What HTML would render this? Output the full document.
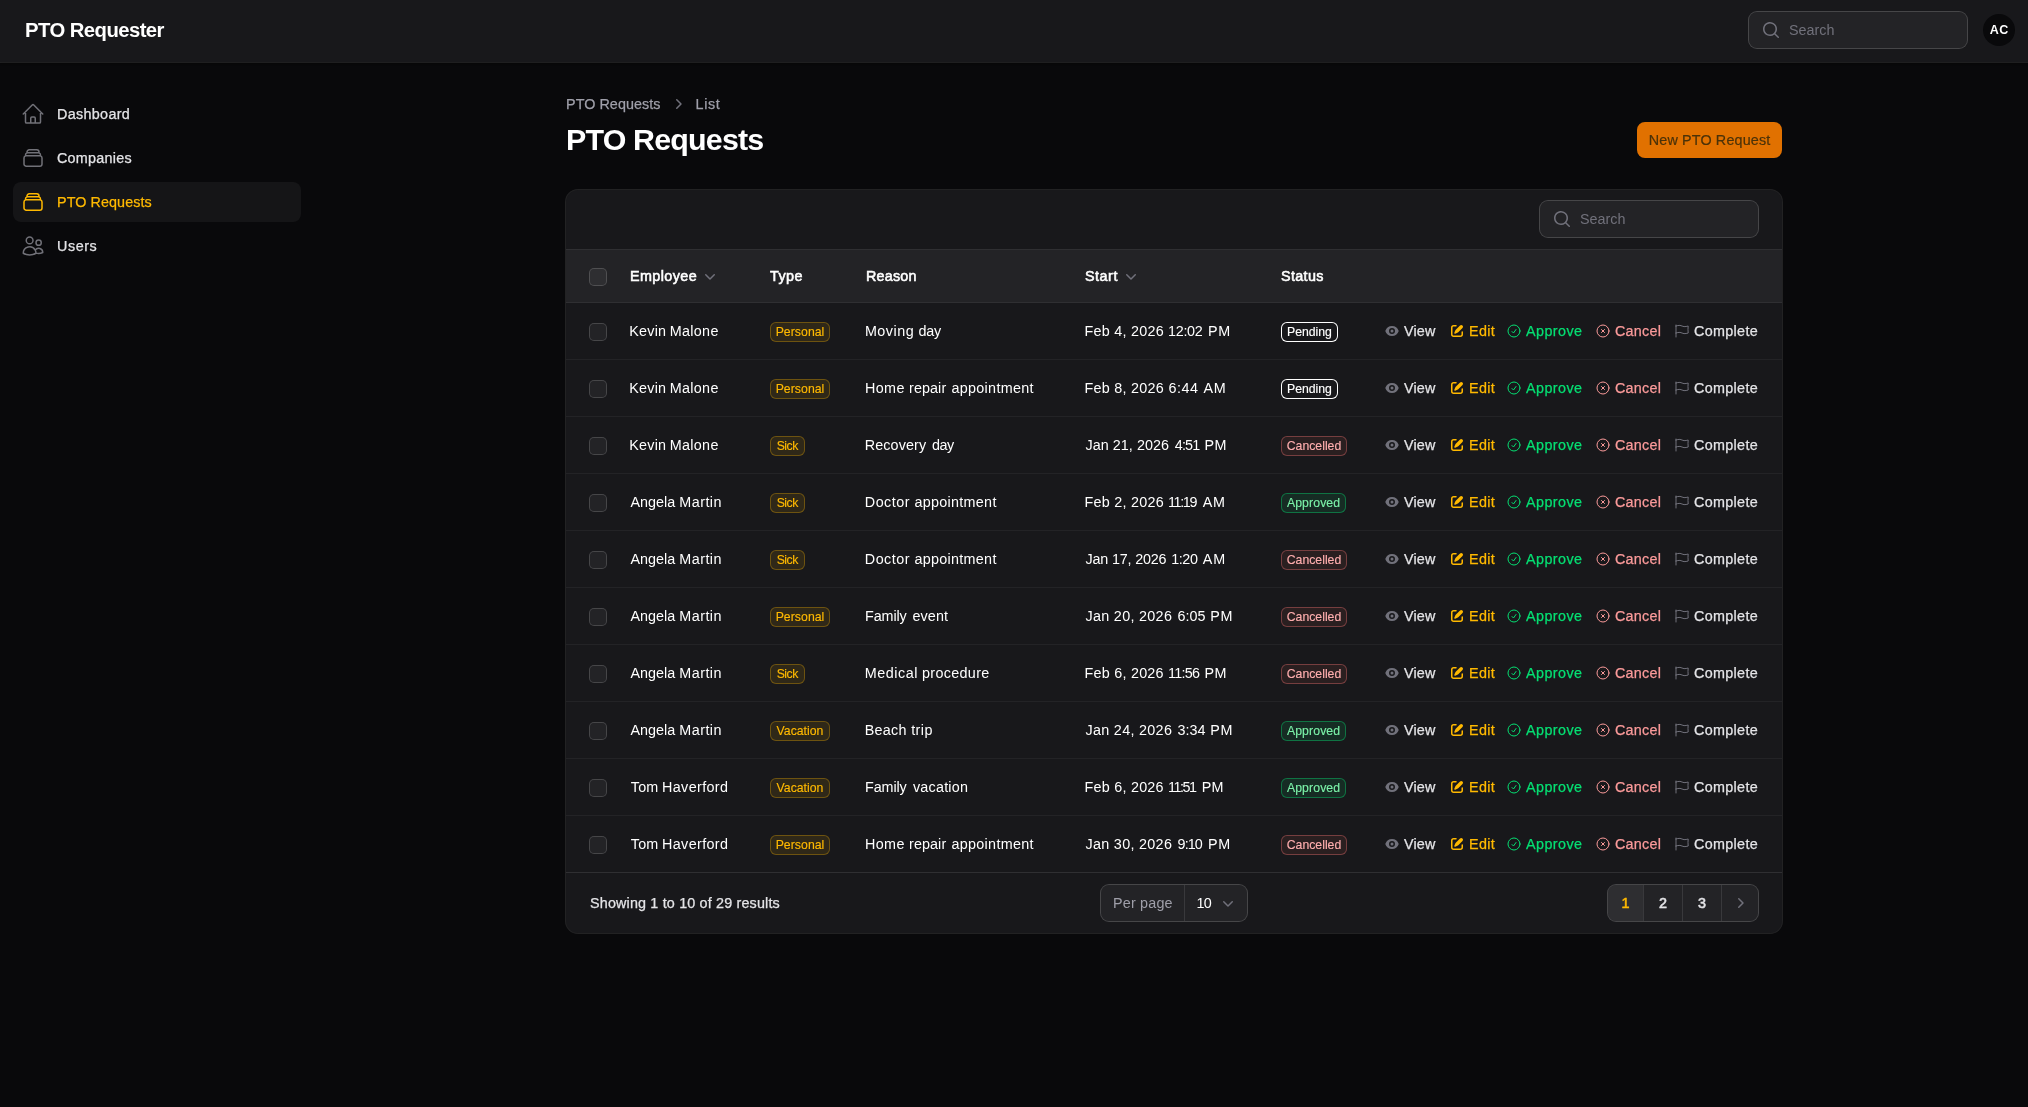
<!DOCTYPE html><html lang="en"><head><meta charset="utf-8"><title>PTO Requests - PTO Requester</title><style>
*{box-sizing:border-box;margin:0;padding:0}
html,body{width:2028px;height:1107px;overflow:hidden;background:#09090b}
body{will-change:transform;font-family:"Liberation Sans",sans-serif;font-size:14px;line-height:24px;color:#fff;position:relative;-webkit-font-smoothing:antialiased}
span,a,h1,p,label{white-space:nowrap}
a{color:inherit;text-decoration:none}
.abs{position:absolute}
svg{display:block;flex:none}
.segs{position:relative;display:inline-block;height:24px;vertical-align:top}
/* topbar */
.topbar{position:absolute;left:0;top:0;width:2028px;height:62px;background:#18181b;box-shadow:0 1px 0 0 rgba(255,255,255,.1),0 2px 2px 0 rgba(0,0,0,.3)}
.brand{position:absolute;left:25px;top:19.5px;line-height:20px;color:#fff}
.gsearch,.tsearch{position:absolute;height:36px;width:218px;border-radius:8px;background:rgba(255,255,255,.05);box-shadow:0 0 0 1px rgba(255,255,255,.2);display:flex;align-items:center;padding-left:12px;color:#71717b}
.gsearch{left:1749px;top:12px}
.gsearch svg,.tsearch svg{margin-right:8px}
.avatar{position:absolute;left:1983px;top:14px;width:32px;height:32px;border-radius:50%;background:#09090b;display:flex;align-items:center;justify-content:center;color:#fff}
/* sidebar */
.nav{position:absolute;left:13px;top:94px;width:288px;list-style:none;display:flex;flex-direction:column;gap:4px}
.nav a{display:flex;align-items:center;gap:12px;height:40px;padding:8px;border-radius:8px;color:#e4e4e7}
.nav a svg{color:#717178}
.nav a.active{background:rgba(255,255,255,.05);color:#ffb900}
.nav a.active svg{color:#ffb900}
/* header */
.crumbs{position:absolute;left:566px;top:92px;height:24px;display:flex;align-items:center;gap:8px;list-style:none;color:#9f9fa9}
.crumbs li{display:flex;align-items:center;gap:8px;position:absolute;top:0;height:24px}
.crumbs svg{color:#71717b}
h1{position:absolute;left:566px;top:121px;line-height:36px;color:#fff}
.btn{position:absolute;left:1637px;top:122px;width:145px;height:36px;border-radius:8px;background:#e17100;color:#4a3209;display:flex;align-items:center;justify-content:center}
/* card */
.card{position:absolute;left:566px;top:190px;width:1216px;height:743px;border-radius:12px;background:#18181b;box-shadow:0 0 0 1px rgba(255,255,255,.1)}
.tsearch{left:974px;top:11px}
.toolbar{height:60px;border-bottom:1px solid rgba(255,255,255,.1);position:relative}
table{border-collapse:collapse;table-layout:fixed;width:1216px}
thead tr{height:52px;background:rgba(255,255,255,.05)}
tbody tr{height:57px;border-top:1px solid rgba(255,255,255,.05)}
tbody tr:first-child{border-top-color:rgba(255,255,255,.1)}
th,td{padding:0 12px;text-align:left;vertical-align:middle;font-weight:400;white-space:nowrap}
th:first-child,td:first-child{padding-left:24px}
th .h{display:flex;align-items:center;gap:0;color:#fff}
th .h span{display:inline-block}
th .h svg{color:#71717b}
.cb{display:block;position:relative;top:1px;width:16px;height:16px;border-radius:4px;background:rgba(255,255,255,.05);box-shadow:0 0 0 1px rgba(255,255,255,.2)}
td{color:#fff}
.badge{display:inline-flex;align-items:center;justify-content:center;height:20px;padding:0;border-radius:6px;line-height:16px;vertical-align:middle}
.b-amber{color:#ffb900;background:rgba(255,185,0,.1);box-shadow:inset 0 0 0 1px rgba(255,185,0,.3)}
.b-red{color:#ffaeae;background:rgba(255,110,100,.08);box-shadow:inset 0 0 0 1px rgba(255,120,120,.36)}
.b-green{color:#7bf1a8;background:rgba(5,223,114,.1);box-shadow:inset 0 0 0 1px rgba(5,223,114,.4)}
.b-white{color:#fff;box-shadow:inset 0 0 0 1px #fff}
.actions{display:flex;align-items:center;justify-content:flex-start;gap:12px;padding-left:24px}
.act{display:flex;align-items:center;gap:4px;flex:none;overflow:visible}
.a-gray{color:#e4e4e7}.a-gray svg{color:#71717b}
.a-amber{color:#ffb900}
.a-green{color:#05df72}
.a-red{color:#fb9a9a}
.footer{position:absolute;left:0;top:682px;width:1216px;height:61px;border-top:1px solid rgba(255,255,255,.1)}
.footer .showing{position:absolute;left:24px;top:18px;color:#e4e4e7}
.perpage{position:absolute;left:535px;top:12px;height:36px;width:146px;border-radius:8px;background:rgba(255,255,255,.05);box-shadow:0 0 0 1px rgba(255,255,255,.2);display:flex;align-items:center}
.perpage .lbl{width:84px;height:36px;border-right:1px solid rgba(255,255,255,.1);display:flex;align-items:center;padding-left:12px;color:#9f9fa9}
.perpage .sel{flex:1;height:36px;display:flex;align-items:center;padding-left:11.5px;color:#fff;position:relative}
.perpage .sel svg{position:absolute;left:33px;top:8px;color:#71717b}
.pager{position:absolute;left:1042px;top:12px;height:36px;width:150px;border-radius:8px;background:rgba(255,255,255,.05);box-shadow:0 0 0 1px rgba(255,255,255,.2);display:flex;list-style:none;overflow:hidden}
.pager li{height:36px;display:flex;align-items:center;justify-content:center;color:#e4e4e7;border-left:1px solid rgba(255,255,255,.1)}
.pager li:first-child{border-left:0}
.pager li.cur{background:rgba(255,255,255,.05);color:#ffb900}
.pager li svg{color:#71717b}
</style></head><body>
<header class="topbar">
<a class="brand"><span style="font-size:20.3px;font-weight:700;letter-spacing:-0.555px;margin-right:0.555px;">PTO Requester</span></a>
<div class="gsearch"><svg width="20" height="20" viewBox="0 0 20 20" fill="currentColor" style=""><path fill-rule="evenodd" clip-rule="evenodd" d="M9 3.5a5.5 5.5 0 1 0 0 11 5.5 5.5 0 0 0 0-11ZM2 9a7 7 0 1 1 12.452 4.391l3.328 3.329a.75.75 0 1 1-1.06 1.06l-3.329-3.328A7 7 0 0 1 2 9Z"/></svg><span style="font-size:14.35px;letter-spacing:0.006px;margin-right:-0.006px;">Search</span></div>
<div class="avatar"><span style="font-size:12.5px;font-weight:700;letter-spacing:0.473px;margin-right:-0.473px;">AC</span></div>
</header>
<nav><ul class="nav">
<li><a><svg width="24" height="24" viewBox="0 0 24 24" fill="none" stroke="currentColor" stroke-width="1.5" stroke-linecap="round" stroke-linejoin="round" style=""><path d="m2.25 12 8.954-8.955c.44-.439 1.152-.439 1.591 0L21.75 12M4.5 9.75v10.125c0 .621.504 1.125 1.125 1.125H9.75v-4.875c0-.621.504-1.125 1.125-1.125h2.25c.621 0 1.125.504 1.125 1.125V21h4.125c.621 0 1.125-.504 1.125-1.125V9.75M8.25 21h8.25"/></svg><span style="font-size:14.35px;-webkit-text-stroke:0.25px currentColor;letter-spacing:0.326px;margin-right:-0.326px;">Dashboard</span></a></li>
<li><a><svg width="24" height="24" viewBox="0 0 24 24" fill="none" stroke="currentColor" stroke-width="1.5" stroke-linecap="round" stroke-linejoin="round" style=""><path d="M6 6.878V6a2.25 2.25 0 0 1 2.25-2.25h7.5A2.25 2.25 0 0 1 18 6v.878m-12 0c.235-.083.487-.128.75-.128h10.5c.263 0 .515.045.75.128m-12 0A2.25 2.25 0 0 0 4.5 9v.878m13.5-3A2.25 2.25 0 0 1 19.5 9v.878m0 0a2.246 2.246 0 0 0-.75-.128H5.25c-.263 0-.515.045-.75.128m15 0A2.25 2.25 0 0 1 21 12v6a2.25 2.25 0 0 1-2.25 2.25H5.25A2.25 2.25 0 0 1 3 18v-6c0-.98.626-1.813 1.5-2.122"/></svg><span style="font-size:14.35px;-webkit-text-stroke:0.25px currentColor;letter-spacing:0.252px;margin-right:-0.252px;">Companies</span></a></li>
<li><a class="active"><svg width="24" height="24" viewBox="0 0 24 24" fill="none" stroke="currentColor" stroke-width="1.5" stroke-linecap="round" stroke-linejoin="round" style=""><path d="M6 6.878V6a2.25 2.25 0 0 1 2.25-2.25h7.5A2.25 2.25 0 0 1 18 6v.878m-12 0c.235-.083.487-.128.75-.128h10.5c.263 0 .515.045.75.128m-12 0A2.25 2.25 0 0 0 4.5 9v.878m13.5-3A2.25 2.25 0 0 1 19.5 9v.878m0 0a2.246 2.246 0 0 0-.75-.128H5.25c-.263 0-.515.045-.75.128m15 0A2.25 2.25 0 0 1 21 12v6a2.25 2.25 0 0 1-2.25 2.25H5.25A2.25 2.25 0 0 1 3 18v-6c0-.98.626-1.813 1.5-2.122"/></svg><span style="font-size:14.35px;-webkit-text-stroke:0.25px currentColor;letter-spacing:0.078px;margin-right:-0.078px;">PTO Requests</span></a></li>
<li><a><svg width="24" height="24" viewBox="0 0 24 24" fill="none" stroke="currentColor" stroke-width="1.5" stroke-linecap="round" stroke-linejoin="round" style=""><path d="M15 19.128a9.38 9.38 0 0 0 2.625.372 9.337 9.337 0 0 0 4.121-.952 4.125 4.125 0 0 0-7.533-2.493M15 19.128v-.003c0-1.113-.285-2.16-.786-3.07M15 19.128v.106A12.318 12.318 0 0 1 8.624 21c-2.331 0-4.512-.645-6.374-1.766l-.001-.109a6.375 6.375 0 0 1 11.964-3.07M12 6.375a3.375 3.375 0 1 1-6.75 0 3.375 3.375 0 0 1 6.75 0Zm8.25 2.25a2.625 2.625 0 1 1-5.25 0 2.625 2.625 0 0 1 5.25 0Z"/></svg><span style="font-size:14.35px;-webkit-text-stroke:0.25px currentColor;letter-spacing:0.554px;margin-right:-0.554px;">Users</span></a></li>
</ul></nav>
<main>
<ol class="crumbs"><li style="left:0"><span style="font-size:14.35px;-webkit-text-stroke:0.25px currentColor;letter-spacing:0.060px;margin-right:-0.060px;">PTO Requests</span></li><li style="left:101.5px"><svg width="20" height="20" viewBox="0 0 20 20" fill="currentColor" style=""><path fill-rule="evenodd" clip-rule="evenodd" d="M8.22 5.22a.75.75 0 0 1 1.06 0l4.25 4.25a.75.75 0 0 1 0 1.06l-4.25 4.25a.75.75 0 0 1-1.06-1.06L11.94 10 8.22 6.28a.75.75 0 0 1 0-1.06Z"/></svg><span style="font-size:14.35px;-webkit-text-stroke:0.25px currentColor;letter-spacing:0.655px;margin-right:-0.655px;">List</span></li></ol>
<h1 style="font-size:30.4px;font-weight:700;letter-spacing:-0.815px;margin-right:0.815px;">PTO Requests</h1>
<a class="btn"><span style="font-size:14.35px;-webkit-text-stroke:0.2px currentColor;letter-spacing:0.155px;margin-right:-0.155px;">New PTO Request</span></a>
<section class="card">
<div class="toolbar"><div class="tsearch"><svg width="20" height="20" viewBox="0 0 20 20" fill="currentColor" style=""><path fill-rule="evenodd" clip-rule="evenodd" d="M9 3.5a5.5 5.5 0 1 0 0 11 5.5 5.5 0 0 0 0-11ZM2 9a7 7 0 1 1 12.452 4.391l3.328 3.329a.75.75 0 1 1-1.06 1.06l-3.329-3.328A7 7 0 0 1 2 9Z"/></svg><span style="font-size:14.35px;letter-spacing:0.006px;margin-right:-0.006px;">Search</span></div></div>
<table><colgroup><col style="width:52px"><col style="width:140px"><col style="width:96px"><col style="width:219px"><col style="width:196px"><col style="width:91px"><col style="width:422px"></colgroup>
<thead><tr><th><span class="cb"></span></th><th><span class="h"><span style="font-size:14.35px;-webkit-text-stroke:0.55px currentColor;letter-spacing:0.413px;margin-right:-0.413px;width:70px">Employee</span><svg width="20" height="20" viewBox="0 0 20 20" fill="currentColor" style=""><path fill-rule="evenodd" clip-rule="evenodd" d="M5.22 8.22a.75.75 0 0 1 1.06 0L10 11.94l3.72-3.72a.75.75 0 1 1 1.06 1.06l-4.25 4.25a.75.75 0 0 1-1.06 0L5.22 9.28a.75.75 0 0 1 0-1.06Z"/></svg></span></th><th><span class="h"><span style="font-size:14.35px;-webkit-text-stroke:0.55px currentColor;letter-spacing:0.427px;margin-right:-0.427px;">Type</span></span></th><th><span class="h"><span style="font-size:14.35px;-webkit-text-stroke:0.55px currentColor;letter-spacing:0.208px;margin-right:-0.208px;">Reason</span></span></th><th><span class="h"><span style="font-size:14.35px;-webkit-text-stroke:0.55px currentColor;letter-spacing:0.523px;margin-right:-0.523px;width:37px">Start</span><svg width="20" height="20" viewBox="0 0 20 20" fill="currentColor" style=""><path fill-rule="evenodd" clip-rule="evenodd" d="M5.22 8.22a.75.75 0 0 1 1.06 0L10 11.94l3.72-3.72a.75.75 0 1 1 1.06 1.06l-4.25 4.25a.75.75 0 0 1-1.06 0L5.22 9.28a.75.75 0 0 1 0-1.06Z"/></svg></span></th><th><span class="h"><span style="font-size:14.35px;-webkit-text-stroke:0.55px currentColor;letter-spacing:0.362px;margin-right:-0.362px;">Status</span></span></th><th></th></tr></thead><tbody>
<tr><td><span class="cb"></span></td>
<td><span class="segs" style="width:88.4px"><span style="font-size:14.35px;letter-spacing:0.224px;margin-right:-0.224px;position:absolute;top:0;left:-0.70px;">Kevin</span> <span style="font-size:14.35px;letter-spacing:0.327px;margin-right:-0.327px;position:absolute;top:0;left:39.70px;">Malone</span></span></td>
<td><span class="badge b-amber" style="width:60px"><span style="font-size:12.25px;-webkit-text-stroke:0.15px currentColor;letter-spacing:0.053px;margin-right:-0.053px;">Personal</span></span></td>
<td><span class="segs" style="width:75.9px"><span style="font-size:14.35px;letter-spacing:0.508px;margin-right:-0.508px;position:absolute;top:0;left:-1.10px;">Moving</span> <span style="font-size:14.35px;letter-spacing:-0.227px;margin-right:0.227px;position:absolute;top:0;left:52.40px;">day</span></span></td>
<td><span class="segs" style="width:144.2px"><span style="font-size:14.35px;letter-spacing:0.262px;margin-right:-0.262px;position:absolute;top:0;left:-0.50px;">Feb 4, 2026</span> <span style="font-size:14.35px;letter-spacing:-0.279px;margin-right:0.279px;position:absolute;top:0;left:83.00px;">12:02</span> <span style="font-size:14.35px;letter-spacing:0.733px;margin-right:-0.733px;position:absolute;top:0;left:122.90px;">PM</span></span></td>
<td><span class="badge b-white" style="width:57px"><span style="font-size:12.25px;-webkit-text-stroke:0.15px currentColor;letter-spacing:-0.024px;margin-right:0.024px;">Pending</span></span></td>
<td style="padding:0"><div class="actions"><a class="act a-gray" style="width:53px"><svg width="16" height="16" viewBox="0 0 16 16" fill="currentColor" style=""><path d="M8 9.5a1.5 1.5 0 1 0 0-3 1.5 1.5 0 0 0 0 3Z"/><path fill-rule="evenodd" clip-rule="evenodd" d="M1.38 8.28a.87.87 0 0 1 0-.566 7.003 7.003 0 0 1 13.238.006.87.87 0 0 1 0 .566A7.003 7.003 0 0 1 1.379 8.28ZM11 8a3 3 0 1 1-6 0 3 3 0 0 1 6 0Z"/></svg><span style="font-size:14.35px;-webkit-text-stroke:0.25px currentColor;letter-spacing:0.176px;margin-right:-0.176px;">View</span></a><a class="act a-amber" style="width:45px"><svg width="16" height="16" viewBox="0 0 16 16" fill="currentColor" style=""><path d="M13.488 2.513a1.75 1.75 0 0 0-2.475 0L6.75 6.774a2.75 2.75 0 0 0-.596.892l-.848 2.047a.75.75 0 0 0 .98.98l2.047-.848a2.75 2.75 0 0 0 .892-.596l4.261-4.262a1.75 1.75 0 0 0 0-2.474Z"/><path d="M4.75 3.5c-.69 0-1.25.56-1.25 1.25v6.5c0 .69.56 1.25 1.25 1.25h6.5c.69 0 1.25-.56 1.25-1.25V9A.75.75 0 0 1 14 9v2.25A2.75 2.75 0 0 1 11.25 14h-6.5A2.75 2.75 0 0 1 2 11.25v-6.5A2.75 2.75 0 0 1 4.75 2H7a.75.75 0 0 1 0 1.5H4.75Z"/></svg><span style="font-size:14.35px;-webkit-text-stroke:0.25px currentColor;letter-spacing:0.323px;margin-right:-0.323px;">Edit</span></a><a class="act a-green" style="width:77px"><svg width="16" height="16" viewBox="0 0 24 24" fill="none" stroke="currentColor" stroke-width="1.5" stroke-linecap="round" stroke-linejoin="round" style=""><path d="M9 12.75 11.25 15 15 9.75M21 12a9 9 0 1 1-18 0 9 9 0 0 1 18 0Z"/></svg><span style="font-size:14.35px;-webkit-text-stroke:0.25px currentColor;letter-spacing:0.425px;margin-right:-0.425px;">Approve</span></a><a class="act a-red" style="width:67px"><svg width="16" height="16" viewBox="0 0 24 24" fill="none" stroke="currentColor" stroke-width="1.5" stroke-linecap="round" stroke-linejoin="round" style=""><path d="m9.75 9.75 4.5 4.5m0-4.5-4.5 4.5M21 12a9 9 0 1 1-18 0 9 9 0 0 1 18 0Z"/></svg><span style="font-size:14.35px;-webkit-text-stroke:0.25px currentColor;letter-spacing:0.248px;margin-right:-0.248px;">Cancel</span></a><a class="act a-gray" style="width:85px"><svg width="16" height="16" viewBox="0 0 24 24" fill="none" stroke="currentColor" stroke-width="1.5" stroke-linecap="round" stroke-linejoin="round" style=""><path d="M3 3v1.5M3 21v-6m0 0 2.77-.693a9 9 0 0 1 6.208.682l.108.054a9 9 0 0 0 6.086.71l3.114-.732a48.524 48.524 0 0 1-.005-10.499l-3.11.732a9 9 0 0 1-6.085-.711l-.108-.054a9 9 0 0 0-6.208-.682L3 4.5M3 15V4.5"/></svg><span style="font-size:14.35px;-webkit-text-stroke:0.25px currentColor;letter-spacing:0.327px;margin-right:-0.327px;">Complete</span></a></div></td></tr>
<tr><td><span class="cb"></span></td>
<td><span class="segs" style="width:88.4px"><span style="font-size:14.35px;letter-spacing:0.224px;margin-right:-0.224px;position:absolute;top:0;left:-0.70px;">Kevin</span> <span style="font-size:14.35px;letter-spacing:0.327px;margin-right:-0.327px;position:absolute;top:0;left:39.70px;">Malone</span></span></td>
<td><span class="badge b-amber" style="width:60px"><span style="font-size:12.25px;-webkit-text-stroke:0.15px currentColor;letter-spacing:0.053px;margin-right:-0.053px;">Personal</span></span></td>
<td><span class="segs" style="width:167.6px"><span style="font-size:14.35px;letter-spacing:0.439px;margin-right:-0.439px;position:absolute;top:0;left:-1.10px;">Home</span> <span style="font-size:14.35px;letter-spacing:0.101px;margin-right:-0.101px;position:absolute;top:0;left:43.00px;">repair</span> <span style="font-size:14.35px;letter-spacing:0.324px;margin-right:-0.324px;position:absolute;top:0;left:85.40px;">appointment</span></span></td>
<td><span class="segs" style="width:139.7px"><span style="font-size:14.35px;letter-spacing:0.262px;margin-right:-0.262px;position:absolute;top:0;left:-0.50px;">Feb 8, 2026</span> <span style="font-size:14.35px;letter-spacing:0.453px;margin-right:-0.453px;position:absolute;top:0;left:83.60px;">6:44</span> <span style="font-size:14.35px;letter-spacing:0.533px;margin-right:-0.533px;position:absolute;top:0;left:118.60px;">AM</span></span></td>
<td><span class="badge b-white" style="width:57px"><span style="font-size:12.25px;-webkit-text-stroke:0.15px currentColor;letter-spacing:-0.024px;margin-right:0.024px;">Pending</span></span></td>
<td style="padding:0"><div class="actions"><a class="act a-gray" style="width:53px"><svg width="16" height="16" viewBox="0 0 16 16" fill="currentColor" style=""><path d="M8 9.5a1.5 1.5 0 1 0 0-3 1.5 1.5 0 0 0 0 3Z"/><path fill-rule="evenodd" clip-rule="evenodd" d="M1.38 8.28a.87.87 0 0 1 0-.566 7.003 7.003 0 0 1 13.238.006.87.87 0 0 1 0 .566A7.003 7.003 0 0 1 1.379 8.28ZM11 8a3 3 0 1 1-6 0 3 3 0 0 1 6 0Z"/></svg><span style="font-size:14.35px;-webkit-text-stroke:0.25px currentColor;letter-spacing:0.176px;margin-right:-0.176px;">View</span></a><a class="act a-amber" style="width:45px"><svg width="16" height="16" viewBox="0 0 16 16" fill="currentColor" style=""><path d="M13.488 2.513a1.75 1.75 0 0 0-2.475 0L6.75 6.774a2.75 2.75 0 0 0-.596.892l-.848 2.047a.75.75 0 0 0 .98.98l2.047-.848a2.75 2.75 0 0 0 .892-.596l4.261-4.262a1.75 1.75 0 0 0 0-2.474Z"/><path d="M4.75 3.5c-.69 0-1.25.56-1.25 1.25v6.5c0 .69.56 1.25 1.25 1.25h6.5c.69 0 1.25-.56 1.25-1.25V9A.75.75 0 0 1 14 9v2.25A2.75 2.75 0 0 1 11.25 14h-6.5A2.75 2.75 0 0 1 2 11.25v-6.5A2.75 2.75 0 0 1 4.75 2H7a.75.75 0 0 1 0 1.5H4.75Z"/></svg><span style="font-size:14.35px;-webkit-text-stroke:0.25px currentColor;letter-spacing:0.323px;margin-right:-0.323px;">Edit</span></a><a class="act a-green" style="width:77px"><svg width="16" height="16" viewBox="0 0 24 24" fill="none" stroke="currentColor" stroke-width="1.5" stroke-linecap="round" stroke-linejoin="round" style=""><path d="M9 12.75 11.25 15 15 9.75M21 12a9 9 0 1 1-18 0 9 9 0 0 1 18 0Z"/></svg><span style="font-size:14.35px;-webkit-text-stroke:0.25px currentColor;letter-spacing:0.425px;margin-right:-0.425px;">Approve</span></a><a class="act a-red" style="width:67px"><svg width="16" height="16" viewBox="0 0 24 24" fill="none" stroke="currentColor" stroke-width="1.5" stroke-linecap="round" stroke-linejoin="round" style=""><path d="m9.75 9.75 4.5 4.5m0-4.5-4.5 4.5M21 12a9 9 0 1 1-18 0 9 9 0 0 1 18 0Z"/></svg><span style="font-size:14.35px;-webkit-text-stroke:0.25px currentColor;letter-spacing:0.248px;margin-right:-0.248px;">Cancel</span></a><a class="act a-gray" style="width:85px"><svg width="16" height="16" viewBox="0 0 24 24" fill="none" stroke="currentColor" stroke-width="1.5" stroke-linecap="round" stroke-linejoin="round" style=""><path d="M3 3v1.5M3 21v-6m0 0 2.77-.693a9 9 0 0 1 6.208.682l.108.054a9 9 0 0 0 6.086.71l3.114-.732a48.524 48.524 0 0 1-.005-10.499l-3.11.732a9 9 0 0 1-6.085-.711l-.108-.054a9 9 0 0 0-6.208-.682L3 4.5M3 15V4.5"/></svg><span style="font-size:14.35px;-webkit-text-stroke:0.25px currentColor;letter-spacing:0.327px;margin-right:-0.327px;">Complete</span></a></div></td></tr>
<tr><td><span class="cb"></span></td>
<td><span class="segs" style="width:88.4px"><span style="font-size:14.35px;letter-spacing:0.224px;margin-right:-0.224px;position:absolute;top:0;left:-0.70px;">Kevin</span> <span style="font-size:14.35px;letter-spacing:0.327px;margin-right:-0.327px;position:absolute;top:0;left:39.70px;">Malone</span></span></td>
<td><span class="badge b-amber" style="width:35px"><span style="font-size:12.25px;-webkit-text-stroke:0.15px currentColor;letter-spacing:-0.472px;margin-right:0.472px;">Sick</span></span></td>
<td><span class="segs" style="width:89.0px"><span style="font-size:14.35px;letter-spacing:0.113px;margin-right:-0.113px;position:absolute;top:0;left:-1.30px;">Recovery</span> <span style="font-size:14.35px;letter-spacing:-0.477px;margin-right:0.477px;position:absolute;top:0;left:66.00px;">day</span></span></td>
<td><span class="segs" style="width:140.5px"><span style="font-size:14.35px;letter-spacing:0.048px;margin-right:-0.048px;position:absolute;top:0;left:0.50px;">Jan 21, 2026</span> <span style="font-size:14.35px;letter-spacing:-0.780px;margin-right:0.780px;position:absolute;top:0;left:89.70px;">4:51</span> <span style="font-size:14.35px;letter-spacing:0.333px;margin-right:-0.333px;position:absolute;top:0;left:119.60px;">PM</span></span></td>
<td><span class="badge b-red" style="width:66px"><span style="font-size:12.25px;-webkit-text-stroke:0.15px currentColor;">Cancelled</span></span></td>
<td style="padding:0"><div class="actions"><a class="act a-gray" style="width:53px"><svg width="16" height="16" viewBox="0 0 16 16" fill="currentColor" style=""><path d="M8 9.5a1.5 1.5 0 1 0 0-3 1.5 1.5 0 0 0 0 3Z"/><path fill-rule="evenodd" clip-rule="evenodd" d="M1.38 8.28a.87.87 0 0 1 0-.566 7.003 7.003 0 0 1 13.238.006.87.87 0 0 1 0 .566A7.003 7.003 0 0 1 1.379 8.28ZM11 8a3 3 0 1 1-6 0 3 3 0 0 1 6 0Z"/></svg><span style="font-size:14.35px;-webkit-text-stroke:0.25px currentColor;letter-spacing:0.176px;margin-right:-0.176px;">View</span></a><a class="act a-amber" style="width:45px"><svg width="16" height="16" viewBox="0 0 16 16" fill="currentColor" style=""><path d="M13.488 2.513a1.75 1.75 0 0 0-2.475 0L6.75 6.774a2.75 2.75 0 0 0-.596.892l-.848 2.047a.75.75 0 0 0 .98.98l2.047-.848a2.75 2.75 0 0 0 .892-.596l4.261-4.262a1.75 1.75 0 0 0 0-2.474Z"/><path d="M4.75 3.5c-.69 0-1.25.56-1.25 1.25v6.5c0 .69.56 1.25 1.25 1.25h6.5c.69 0 1.25-.56 1.25-1.25V9A.75.75 0 0 1 14 9v2.25A2.75 2.75 0 0 1 11.25 14h-6.5A2.75 2.75 0 0 1 2 11.25v-6.5A2.75 2.75 0 0 1 4.75 2H7a.75.75 0 0 1 0 1.5H4.75Z"/></svg><span style="font-size:14.35px;-webkit-text-stroke:0.25px currentColor;letter-spacing:0.323px;margin-right:-0.323px;">Edit</span></a><a class="act a-green" style="width:77px"><svg width="16" height="16" viewBox="0 0 24 24" fill="none" stroke="currentColor" stroke-width="1.5" stroke-linecap="round" stroke-linejoin="round" style=""><path d="M9 12.75 11.25 15 15 9.75M21 12a9 9 0 1 1-18 0 9 9 0 0 1 18 0Z"/></svg><span style="font-size:14.35px;-webkit-text-stroke:0.25px currentColor;letter-spacing:0.425px;margin-right:-0.425px;">Approve</span></a><a class="act a-red" style="width:67px"><svg width="16" height="16" viewBox="0 0 24 24" fill="none" stroke="currentColor" stroke-width="1.5" stroke-linecap="round" stroke-linejoin="round" style=""><path d="m9.75 9.75 4.5 4.5m0-4.5-4.5 4.5M21 12a9 9 0 1 1-18 0 9 9 0 0 1 18 0Z"/></svg><span style="font-size:14.35px;-webkit-text-stroke:0.25px currentColor;letter-spacing:0.248px;margin-right:-0.248px;">Cancel</span></a><a class="act a-gray" style="width:85px"><svg width="16" height="16" viewBox="0 0 24 24" fill="none" stroke="currentColor" stroke-width="1.5" stroke-linecap="round" stroke-linejoin="round" style=""><path d="M3 3v1.5M3 21v-6m0 0 2.77-.693a9 9 0 0 1 6.208.682l.108.054a9 9 0 0 0 6.086.71l3.114-.732a48.524 48.524 0 0 1-.005-10.499l-3.11.732a9 9 0 0 1-6.085-.711l-.108-.054a9 9 0 0 0-6.208-.682L3 4.5M3 15V4.5"/></svg><span style="font-size:14.35px;-webkit-text-stroke:0.25px currentColor;letter-spacing:0.327px;margin-right:-0.327px;">Complete</span></a></div></td></tr>
<tr><td><span class="cb"></span></td>
<td><span class="segs" style="width:91.5px"><span style="font-size:14.35px;letter-spacing:0.043px;margin-right:-0.043px;position:absolute;top:0;left:0.40px;">Angela</span> <span style="font-size:14.35px;letter-spacing:0.465px;margin-right:-0.465px;position:absolute;top:0;left:49.30px;">Martin</span></span></td>
<td><span class="badge b-amber" style="width:35px"><span style="font-size:12.25px;-webkit-text-stroke:0.15px currentColor;letter-spacing:-0.472px;margin-right:0.472px;">Sick</span></span></td>
<td><span class="segs" style="width:130.4px"><span style="font-size:14.35px;letter-spacing:0.486px;margin-right:-0.486px;position:absolute;top:0;left:-1.20px;">Doctor</span> <span style="font-size:14.35px;letter-spacing:0.304px;margin-right:-0.304px;position:absolute;top:0;left:48.40px;">appointment</span></span></td>
<td><span class="segs" style="width:138.9px"><span style="font-size:14.35px;letter-spacing:0.262px;margin-right:-0.262px;position:absolute;top:0;left:-0.50px;">Feb 2, 2026</span> <span style="font-size:14.35px;letter-spacing:-1.338px;margin-right:1.338px;position:absolute;top:0;left:83.00px;">11:19</span> <span style="font-size:14.35px;letter-spacing:0.533px;margin-right:-0.533px;position:absolute;top:0;left:117.80px;">AM</span></span></td>
<td><span class="badge b-green" style="width:65px"><span style="font-size:12.25px;-webkit-text-stroke:0.15px currentColor;letter-spacing:0.111px;margin-right:-0.111px;">Approved</span></span></td>
<td style="padding:0"><div class="actions"><a class="act a-gray" style="width:53px"><svg width="16" height="16" viewBox="0 0 16 16" fill="currentColor" style=""><path d="M8 9.5a1.5 1.5 0 1 0 0-3 1.5 1.5 0 0 0 0 3Z"/><path fill-rule="evenodd" clip-rule="evenodd" d="M1.38 8.28a.87.87 0 0 1 0-.566 7.003 7.003 0 0 1 13.238.006.87.87 0 0 1 0 .566A7.003 7.003 0 0 1 1.379 8.28ZM11 8a3 3 0 1 1-6 0 3 3 0 0 1 6 0Z"/></svg><span style="font-size:14.35px;-webkit-text-stroke:0.25px currentColor;letter-spacing:0.176px;margin-right:-0.176px;">View</span></a><a class="act a-amber" style="width:45px"><svg width="16" height="16" viewBox="0 0 16 16" fill="currentColor" style=""><path d="M13.488 2.513a1.75 1.75 0 0 0-2.475 0L6.75 6.774a2.75 2.75 0 0 0-.596.892l-.848 2.047a.75.75 0 0 0 .98.98l2.047-.848a2.75 2.75 0 0 0 .892-.596l4.261-4.262a1.75 1.75 0 0 0 0-2.474Z"/><path d="M4.75 3.5c-.69 0-1.25.56-1.25 1.25v6.5c0 .69.56 1.25 1.25 1.25h6.5c.69 0 1.25-.56 1.25-1.25V9A.75.75 0 0 1 14 9v2.25A2.75 2.75 0 0 1 11.25 14h-6.5A2.75 2.75 0 0 1 2 11.25v-6.5A2.75 2.75 0 0 1 4.75 2H7a.75.75 0 0 1 0 1.5H4.75Z"/></svg><span style="font-size:14.35px;-webkit-text-stroke:0.25px currentColor;letter-spacing:0.323px;margin-right:-0.323px;">Edit</span></a><a class="act a-green" style="width:77px"><svg width="16" height="16" viewBox="0 0 24 24" fill="none" stroke="currentColor" stroke-width="1.5" stroke-linecap="round" stroke-linejoin="round" style=""><path d="M9 12.75 11.25 15 15 9.75M21 12a9 9 0 1 1-18 0 9 9 0 0 1 18 0Z"/></svg><span style="font-size:14.35px;-webkit-text-stroke:0.25px currentColor;letter-spacing:0.425px;margin-right:-0.425px;">Approve</span></a><a class="act a-red" style="width:67px"><svg width="16" height="16" viewBox="0 0 24 24" fill="none" stroke="currentColor" stroke-width="1.5" stroke-linecap="round" stroke-linejoin="round" style=""><path d="m9.75 9.75 4.5 4.5m0-4.5-4.5 4.5M21 12a9 9 0 1 1-18 0 9 9 0 0 1 18 0Z"/></svg><span style="font-size:14.35px;-webkit-text-stroke:0.25px currentColor;letter-spacing:0.248px;margin-right:-0.248px;">Cancel</span></a><a class="act a-gray" style="width:85px"><svg width="16" height="16" viewBox="0 0 24 24" fill="none" stroke="currentColor" stroke-width="1.5" stroke-linecap="round" stroke-linejoin="round" style=""><path d="M3 3v1.5M3 21v-6m0 0 2.77-.693a9 9 0 0 1 6.208.682l.108.054a9 9 0 0 0 6.086.71l3.114-.732a48.524 48.524 0 0 1-.005-10.499l-3.11.732a9 9 0 0 1-6.085-.711l-.108-.054a9 9 0 0 0-6.208-.682L3 4.5M3 15V4.5"/></svg><span style="font-size:14.35px;-webkit-text-stroke:0.25px currentColor;letter-spacing:0.327px;margin-right:-0.327px;">Complete</span></a></div></td></tr>
<tr><td><span class="cb"></span></td>
<td><span class="segs" style="width:91.5px"><span style="font-size:14.35px;letter-spacing:0.043px;margin-right:-0.043px;position:absolute;top:0;left:0.40px;">Angela</span> <span style="font-size:14.35px;letter-spacing:0.465px;margin-right:-0.465px;position:absolute;top:0;left:49.30px;">Martin</span></span></td>
<td><span class="badge b-amber" style="width:35px"><span style="font-size:12.25px;-webkit-text-stroke:0.15px currentColor;letter-spacing:-0.472px;margin-right:0.472px;">Sick</span></span></td>
<td><span class="segs" style="width:130.4px"><span style="font-size:14.35px;letter-spacing:0.486px;margin-right:-0.486px;position:absolute;top:0;left:-1.20px;">Doctor</span> <span style="font-size:14.35px;letter-spacing:0.304px;margin-right:-0.304px;position:absolute;top:0;left:48.40px;">appointment</span></span></td>
<td><span class="segs" style="width:139.3px"><span style="font-size:14.35px;letter-spacing:-0.170px;margin-right:0.170px;position:absolute;top:0;left:0.50px;">Jan 17, 2026</span> <span style="font-size:14.35px;letter-spacing:-0.447px;margin-right:0.447px;position:absolute;top:0;left:86.30px;">1:20</span> <span style="font-size:14.35px;letter-spacing:0.933px;margin-right:-0.933px;position:absolute;top:0;left:117.80px;">AM</span></span></td>
<td><span class="badge b-red" style="width:66px"><span style="font-size:12.25px;-webkit-text-stroke:0.15px currentColor;">Cancelled</span></span></td>
<td style="padding:0"><div class="actions"><a class="act a-gray" style="width:53px"><svg width="16" height="16" viewBox="0 0 16 16" fill="currentColor" style=""><path d="M8 9.5a1.5 1.5 0 1 0 0-3 1.5 1.5 0 0 0 0 3Z"/><path fill-rule="evenodd" clip-rule="evenodd" d="M1.38 8.28a.87.87 0 0 1 0-.566 7.003 7.003 0 0 1 13.238.006.87.87 0 0 1 0 .566A7.003 7.003 0 0 1 1.379 8.28ZM11 8a3 3 0 1 1-6 0 3 3 0 0 1 6 0Z"/></svg><span style="font-size:14.35px;-webkit-text-stroke:0.25px currentColor;letter-spacing:0.176px;margin-right:-0.176px;">View</span></a><a class="act a-amber" style="width:45px"><svg width="16" height="16" viewBox="0 0 16 16" fill="currentColor" style=""><path d="M13.488 2.513a1.75 1.75 0 0 0-2.475 0L6.75 6.774a2.75 2.75 0 0 0-.596.892l-.848 2.047a.75.75 0 0 0 .98.98l2.047-.848a2.75 2.75 0 0 0 .892-.596l4.261-4.262a1.75 1.75 0 0 0 0-2.474Z"/><path d="M4.75 3.5c-.69 0-1.25.56-1.25 1.25v6.5c0 .69.56 1.25 1.25 1.25h6.5c.69 0 1.25-.56 1.25-1.25V9A.75.75 0 0 1 14 9v2.25A2.75 2.75 0 0 1 11.25 14h-6.5A2.75 2.75 0 0 1 2 11.25v-6.5A2.75 2.75 0 0 1 4.75 2H7a.75.75 0 0 1 0 1.5H4.75Z"/></svg><span style="font-size:14.35px;-webkit-text-stroke:0.25px currentColor;letter-spacing:0.323px;margin-right:-0.323px;">Edit</span></a><a class="act a-green" style="width:77px"><svg width="16" height="16" viewBox="0 0 24 24" fill="none" stroke="currentColor" stroke-width="1.5" stroke-linecap="round" stroke-linejoin="round" style=""><path d="M9 12.75 11.25 15 15 9.75M21 12a9 9 0 1 1-18 0 9 9 0 0 1 18 0Z"/></svg><span style="font-size:14.35px;-webkit-text-stroke:0.25px currentColor;letter-spacing:0.425px;margin-right:-0.425px;">Approve</span></a><a class="act a-red" style="width:67px"><svg width="16" height="16" viewBox="0 0 24 24" fill="none" stroke="currentColor" stroke-width="1.5" stroke-linecap="round" stroke-linejoin="round" style=""><path d="m9.75 9.75 4.5 4.5m0-4.5-4.5 4.5M21 12a9 9 0 1 1-18 0 9 9 0 0 1 18 0Z"/></svg><span style="font-size:14.35px;-webkit-text-stroke:0.25px currentColor;letter-spacing:0.248px;margin-right:-0.248px;">Cancel</span></a><a class="act a-gray" style="width:85px"><svg width="16" height="16" viewBox="0 0 24 24" fill="none" stroke="currentColor" stroke-width="1.5" stroke-linecap="round" stroke-linejoin="round" style=""><path d="M3 3v1.5M3 21v-6m0 0 2.77-.693a9 9 0 0 1 6.208.682l.108.054a9 9 0 0 0 6.086.71l3.114-.732a48.524 48.524 0 0 1-.005-10.499l-3.11.732a9 9 0 0 1-6.085-.711l-.108-.054a9 9 0 0 0-6.208-.682L3 4.5M3 15V4.5"/></svg><span style="font-size:14.35px;-webkit-text-stroke:0.25px currentColor;letter-spacing:0.327px;margin-right:-0.327px;">Complete</span></a></div></td></tr>
<tr><td><span class="cb"></span></td>
<td><span class="segs" style="width:91.5px"><span style="font-size:14.35px;letter-spacing:0.043px;margin-right:-0.043px;position:absolute;top:0;left:0.40px;">Angela</span> <span style="font-size:14.35px;letter-spacing:0.465px;margin-right:-0.465px;position:absolute;top:0;left:49.30px;">Martin</span></span></td>
<td><span class="badge b-amber" style="width:60px"><span style="font-size:12.25px;-webkit-text-stroke:0.15px currentColor;letter-spacing:0.053px;margin-right:-0.053px;">Personal</span></span></td>
<td><span class="segs" style="width:82.0px"><span style="font-size:14.35px;letter-spacing:-0.112px;margin-right:0.112px;position:absolute;top:0;left:-0.90px;">Family</span> <span style="font-size:14.35px;letter-spacing:0.099px;margin-right:-0.099px;position:absolute;top:0;left:46.50px;">event</span></span></td>
<td><span class="segs" style="width:146.4px"><span style="font-size:14.35px;letter-spacing:0.312px;margin-right:-0.312px;position:absolute;top:0;left:0.50px;">Jan 20, 2026</span> <span style="font-size:14.35px;letter-spacing:0.020px;margin-right:-0.020px;position:absolute;top:0;left:92.60px;">6:05</span> <span style="font-size:14.35px;letter-spacing:0.533px;margin-right:-0.533px;position:absolute;top:0;left:125.30px;">PM</span></span></td>
<td><span class="badge b-red" style="width:66px"><span style="font-size:12.25px;-webkit-text-stroke:0.15px currentColor;">Cancelled</span></span></td>
<td style="padding:0"><div class="actions"><a class="act a-gray" style="width:53px"><svg width="16" height="16" viewBox="0 0 16 16" fill="currentColor" style=""><path d="M8 9.5a1.5 1.5 0 1 0 0-3 1.5 1.5 0 0 0 0 3Z"/><path fill-rule="evenodd" clip-rule="evenodd" d="M1.38 8.28a.87.87 0 0 1 0-.566 7.003 7.003 0 0 1 13.238.006.87.87 0 0 1 0 .566A7.003 7.003 0 0 1 1.379 8.28ZM11 8a3 3 0 1 1-6 0 3 3 0 0 1 6 0Z"/></svg><span style="font-size:14.35px;-webkit-text-stroke:0.25px currentColor;letter-spacing:0.176px;margin-right:-0.176px;">View</span></a><a class="act a-amber" style="width:45px"><svg width="16" height="16" viewBox="0 0 16 16" fill="currentColor" style=""><path d="M13.488 2.513a1.75 1.75 0 0 0-2.475 0L6.75 6.774a2.75 2.75 0 0 0-.596.892l-.848 2.047a.75.75 0 0 0 .98.98l2.047-.848a2.75 2.75 0 0 0 .892-.596l4.261-4.262a1.75 1.75 0 0 0 0-2.474Z"/><path d="M4.75 3.5c-.69 0-1.25.56-1.25 1.25v6.5c0 .69.56 1.25 1.25 1.25h6.5c.69 0 1.25-.56 1.25-1.25V9A.75.75 0 0 1 14 9v2.25A2.75 2.75 0 0 1 11.25 14h-6.5A2.75 2.75 0 0 1 2 11.25v-6.5A2.75 2.75 0 0 1 4.75 2H7a.75.75 0 0 1 0 1.5H4.75Z"/></svg><span style="font-size:14.35px;-webkit-text-stroke:0.25px currentColor;letter-spacing:0.323px;margin-right:-0.323px;">Edit</span></a><a class="act a-green" style="width:77px"><svg width="16" height="16" viewBox="0 0 24 24" fill="none" stroke="currentColor" stroke-width="1.5" stroke-linecap="round" stroke-linejoin="round" style=""><path d="M9 12.75 11.25 15 15 9.75M21 12a9 9 0 1 1-18 0 9 9 0 0 1 18 0Z"/></svg><span style="font-size:14.35px;-webkit-text-stroke:0.25px currentColor;letter-spacing:0.425px;margin-right:-0.425px;">Approve</span></a><a class="act a-red" style="width:67px"><svg width="16" height="16" viewBox="0 0 24 24" fill="none" stroke="currentColor" stroke-width="1.5" stroke-linecap="round" stroke-linejoin="round" style=""><path d="m9.75 9.75 4.5 4.5m0-4.5-4.5 4.5M21 12a9 9 0 1 1-18 0 9 9 0 0 1 18 0Z"/></svg><span style="font-size:14.35px;-webkit-text-stroke:0.25px currentColor;letter-spacing:0.248px;margin-right:-0.248px;">Cancel</span></a><a class="act a-gray" style="width:85px"><svg width="16" height="16" viewBox="0 0 24 24" fill="none" stroke="currentColor" stroke-width="1.5" stroke-linecap="round" stroke-linejoin="round" style=""><path d="M3 3v1.5M3 21v-6m0 0 2.77-.693a9 9 0 0 1 6.208.682l.108.054a9 9 0 0 0 6.086.71l3.114-.732a48.524 48.524 0 0 1-.005-10.499l-3.11.732a9 9 0 0 1-6.085-.711l-.108-.054a9 9 0 0 0-6.208-.682L3 4.5M3 15V4.5"/></svg><span style="font-size:14.35px;-webkit-text-stroke:0.25px currentColor;letter-spacing:0.327px;margin-right:-0.327px;">Complete</span></a></div></td></tr>
<tr><td><span class="cb"></span></td>
<td><span class="segs" style="width:91.5px"><span style="font-size:14.35px;letter-spacing:0.043px;margin-right:-0.043px;position:absolute;top:0;left:0.40px;">Angela</span> <span style="font-size:14.35px;letter-spacing:0.465px;margin-right:-0.465px;position:absolute;top:0;left:49.30px;">Martin</span></span></td>
<td><span class="badge b-amber" style="width:35px"><span style="font-size:12.25px;-webkit-text-stroke:0.15px currentColor;letter-spacing:-0.472px;margin-right:0.472px;">Sick</span></span></td>
<td><span class="segs" style="width:123.3px"><span style="font-size:14.35px;letter-spacing:0.527px;margin-right:-0.527px;position:absolute;top:0;left:-1.20px;">Medical</span> <span style="font-size:14.35px;letter-spacing:0.336px;margin-right:-0.336px;position:absolute;top:0;left:56.00px;">procedure</span></span></td>
<td><span class="segs" style="width:140.5px"><span style="font-size:14.35px;letter-spacing:0.252px;margin-right:-0.252px;position:absolute;top:0;left:-0.50px;">Feb 6, 2026</span> <span style="font-size:14.35px;letter-spacing:-0.738px;margin-right:0.738px;position:absolute;top:0;left:83.00px;">11:56</span> <span style="font-size:14.35px;letter-spacing:0.333px;margin-right:-0.333px;position:absolute;top:0;left:119.60px;">PM</span></span></td>
<td><span class="badge b-red" style="width:66px"><span style="font-size:12.25px;-webkit-text-stroke:0.15px currentColor;">Cancelled</span></span></td>
<td style="padding:0"><div class="actions"><a class="act a-gray" style="width:53px"><svg width="16" height="16" viewBox="0 0 16 16" fill="currentColor" style=""><path d="M8 9.5a1.5 1.5 0 1 0 0-3 1.5 1.5 0 0 0 0 3Z"/><path fill-rule="evenodd" clip-rule="evenodd" d="M1.38 8.28a.87.87 0 0 1 0-.566 7.003 7.003 0 0 1 13.238.006.87.87 0 0 1 0 .566A7.003 7.003 0 0 1 1.379 8.28ZM11 8a3 3 0 1 1-6 0 3 3 0 0 1 6 0Z"/></svg><span style="font-size:14.35px;-webkit-text-stroke:0.25px currentColor;letter-spacing:0.176px;margin-right:-0.176px;">View</span></a><a class="act a-amber" style="width:45px"><svg width="16" height="16" viewBox="0 0 16 16" fill="currentColor" style=""><path d="M13.488 2.513a1.75 1.75 0 0 0-2.475 0L6.75 6.774a2.75 2.75 0 0 0-.596.892l-.848 2.047a.75.75 0 0 0 .98.98l2.047-.848a2.75 2.75 0 0 0 .892-.596l4.261-4.262a1.75 1.75 0 0 0 0-2.474Z"/><path d="M4.75 3.5c-.69 0-1.25.56-1.25 1.25v6.5c0 .69.56 1.25 1.25 1.25h6.5c.69 0 1.25-.56 1.25-1.25V9A.75.75 0 0 1 14 9v2.25A2.75 2.75 0 0 1 11.25 14h-6.5A2.75 2.75 0 0 1 2 11.25v-6.5A2.75 2.75 0 0 1 4.75 2H7a.75.75 0 0 1 0 1.5H4.75Z"/></svg><span style="font-size:14.35px;-webkit-text-stroke:0.25px currentColor;letter-spacing:0.323px;margin-right:-0.323px;">Edit</span></a><a class="act a-green" style="width:77px"><svg width="16" height="16" viewBox="0 0 24 24" fill="none" stroke="currentColor" stroke-width="1.5" stroke-linecap="round" stroke-linejoin="round" style=""><path d="M9 12.75 11.25 15 15 9.75M21 12a9 9 0 1 1-18 0 9 9 0 0 1 18 0Z"/></svg><span style="font-size:14.35px;-webkit-text-stroke:0.25px currentColor;letter-spacing:0.425px;margin-right:-0.425px;">Approve</span></a><a class="act a-red" style="width:67px"><svg width="16" height="16" viewBox="0 0 24 24" fill="none" stroke="currentColor" stroke-width="1.5" stroke-linecap="round" stroke-linejoin="round" style=""><path d="m9.75 9.75 4.5 4.5m0-4.5-4.5 4.5M21 12a9 9 0 1 1-18 0 9 9 0 0 1 18 0Z"/></svg><span style="font-size:14.35px;-webkit-text-stroke:0.25px currentColor;letter-spacing:0.248px;margin-right:-0.248px;">Cancel</span></a><a class="act a-gray" style="width:85px"><svg width="16" height="16" viewBox="0 0 24 24" fill="none" stroke="currentColor" stroke-width="1.5" stroke-linecap="round" stroke-linejoin="round" style=""><path d="M3 3v1.5M3 21v-6m0 0 2.77-.693a9 9 0 0 1 6.208.682l.108.054a9 9 0 0 0 6.086.71l3.114-.732a48.524 48.524 0 0 1-.005-10.499l-3.11.732a9 9 0 0 1-6.085-.711l-.108-.054a9 9 0 0 0-6.208-.682L3 4.5M3 15V4.5"/></svg><span style="font-size:14.35px;-webkit-text-stroke:0.25px currentColor;letter-spacing:0.327px;margin-right:-0.327px;">Complete</span></a></div></td></tr>
<tr><td><span class="cb"></span></td>
<td><span class="segs" style="width:91.5px"><span style="font-size:14.35px;letter-spacing:0.043px;margin-right:-0.043px;position:absolute;top:0;left:0.40px;">Angela</span> <span style="font-size:14.35px;letter-spacing:0.465px;margin-right:-0.465px;position:absolute;top:0;left:49.30px;">Martin</span></span></td>
<td><span class="badge b-amber" style="width:60px"><span style="font-size:12.25px;-webkit-text-stroke:0.15px currentColor;letter-spacing:0.007px;margin-right:-0.007px;">Vacation</span></span></td>
<td><span class="segs" style="width:66.4px"><span style="font-size:14.35px;letter-spacing:0.227px;margin-right:-0.227px;position:absolute;top:0;left:-1.20px;">Beach</span> <span style="font-size:14.35px;letter-spacing:0.417px;margin-right:-0.417px;position:absolute;top:0;left:45.20px;">trip</span></span></td>
<td><span class="segs" style="width:146.4px"><span style="font-size:14.35px;letter-spacing:0.312px;margin-right:-0.312px;position:absolute;top:0;left:0.50px;">Jan 24, 2026</span> <span style="font-size:14.35px;letter-spacing:0.020px;margin-right:-0.020px;position:absolute;top:0;left:92.60px;">3:34</span> <span style="font-size:14.35px;letter-spacing:0.533px;margin-right:-0.533px;position:absolute;top:0;left:125.30px;">PM</span></span></td>
<td><span class="badge b-green" style="width:65px"><span style="font-size:12.25px;-webkit-text-stroke:0.15px currentColor;letter-spacing:0.111px;margin-right:-0.111px;">Approved</span></span></td>
<td style="padding:0"><div class="actions"><a class="act a-gray" style="width:53px"><svg width="16" height="16" viewBox="0 0 16 16" fill="currentColor" style=""><path d="M8 9.5a1.5 1.5 0 1 0 0-3 1.5 1.5 0 0 0 0 3Z"/><path fill-rule="evenodd" clip-rule="evenodd" d="M1.38 8.28a.87.87 0 0 1 0-.566 7.003 7.003 0 0 1 13.238.006.87.87 0 0 1 0 .566A7.003 7.003 0 0 1 1.379 8.28ZM11 8a3 3 0 1 1-6 0 3 3 0 0 1 6 0Z"/></svg><span style="font-size:14.35px;-webkit-text-stroke:0.25px currentColor;letter-spacing:0.176px;margin-right:-0.176px;">View</span></a><a class="act a-amber" style="width:45px"><svg width="16" height="16" viewBox="0 0 16 16" fill="currentColor" style=""><path d="M13.488 2.513a1.75 1.75 0 0 0-2.475 0L6.75 6.774a2.75 2.75 0 0 0-.596.892l-.848 2.047a.75.75 0 0 0 .98.98l2.047-.848a2.75 2.75 0 0 0 .892-.596l4.261-4.262a1.75 1.75 0 0 0 0-2.474Z"/><path d="M4.75 3.5c-.69 0-1.25.56-1.25 1.25v6.5c0 .69.56 1.25 1.25 1.25h6.5c.69 0 1.25-.56 1.25-1.25V9A.75.75 0 0 1 14 9v2.25A2.75 2.75 0 0 1 11.25 14h-6.5A2.75 2.75 0 0 1 2 11.25v-6.5A2.75 2.75 0 0 1 4.75 2H7a.75.75 0 0 1 0 1.5H4.75Z"/></svg><span style="font-size:14.35px;-webkit-text-stroke:0.25px currentColor;letter-spacing:0.323px;margin-right:-0.323px;">Edit</span></a><a class="act a-green" style="width:77px"><svg width="16" height="16" viewBox="0 0 24 24" fill="none" stroke="currentColor" stroke-width="1.5" stroke-linecap="round" stroke-linejoin="round" style=""><path d="M9 12.75 11.25 15 15 9.75M21 12a9 9 0 1 1-18 0 9 9 0 0 1 18 0Z"/></svg><span style="font-size:14.35px;-webkit-text-stroke:0.25px currentColor;letter-spacing:0.425px;margin-right:-0.425px;">Approve</span></a><a class="act a-red" style="width:67px"><svg width="16" height="16" viewBox="0 0 24 24" fill="none" stroke="currentColor" stroke-width="1.5" stroke-linecap="round" stroke-linejoin="round" style=""><path d="m9.75 9.75 4.5 4.5m0-4.5-4.5 4.5M21 12a9 9 0 1 1-18 0 9 9 0 0 1 18 0Z"/></svg><span style="font-size:14.35px;-webkit-text-stroke:0.25px currentColor;letter-spacing:0.248px;margin-right:-0.248px;">Cancel</span></a><a class="act a-gray" style="width:85px"><svg width="16" height="16" viewBox="0 0 24 24" fill="none" stroke="currentColor" stroke-width="1.5" stroke-linecap="round" stroke-linejoin="round" style=""><path d="M3 3v1.5M3 21v-6m0 0 2.77-.693a9 9 0 0 1 6.208.682l.108.054a9 9 0 0 0 6.086.71l3.114-.732a48.524 48.524 0 0 1-.005-10.499l-3.11.732a9 9 0 0 1-6.085-.711l-.108-.054a9 9 0 0 0-6.208-.682L3 4.5M3 15V4.5"/></svg><span style="font-size:14.35px;-webkit-text-stroke:0.25px currentColor;letter-spacing:0.327px;margin-right:-0.327px;">Complete</span></a></div></td></tr>
<tr><td><span class="cb"></span></td>
<td><span class="segs" style="width:98.0px"><span style="font-size:14.35px;letter-spacing:0.176px;margin-right:-0.176px;position:absolute;top:0;left:0.80px;">Tom</span> <span style="font-size:14.35px;letter-spacing:0.375px;margin-right:-0.375px;position:absolute;top:0;left:32.00px;">Haverford</span></span></td>
<td><span class="badge b-amber" style="width:60px"><span style="font-size:12.25px;-webkit-text-stroke:0.15px currentColor;letter-spacing:0.007px;margin-right:-0.007px;">Vacation</span></span></td>
<td><span class="segs" style="width:102.0px"><span style="font-size:14.35px;letter-spacing:-0.112px;margin-right:0.112px;position:absolute;top:0;left:-0.90px;">Family</span> <span style="font-size:14.35px;letter-spacing:0.236px;margin-right:-0.236px;position:absolute;top:0;left:46.90px;">vacation</span></span></td>
<td><span class="segs" style="width:137.4px"><span style="font-size:14.35px;letter-spacing:0.252px;margin-right:-0.252px;position:absolute;top:0;left:-0.50px;">Feb 6, 2026</span> <span style="font-size:14.35px;letter-spacing:-1.438px;margin-right:1.438px;position:absolute;top:0;left:83.00px;">11:51</span> <span style="font-size:14.35px;letter-spacing:0.033px;margin-right:-0.033px;position:absolute;top:0;left:116.80px;">PM</span></span></td>
<td><span class="badge b-green" style="width:65px"><span style="font-size:12.25px;-webkit-text-stroke:0.15px currentColor;letter-spacing:0.111px;margin-right:-0.111px;">Approved</span></span></td>
<td style="padding:0"><div class="actions"><a class="act a-gray" style="width:53px"><svg width="16" height="16" viewBox="0 0 16 16" fill="currentColor" style=""><path d="M8 9.5a1.5 1.5 0 1 0 0-3 1.5 1.5 0 0 0 0 3Z"/><path fill-rule="evenodd" clip-rule="evenodd" d="M1.38 8.28a.87.87 0 0 1 0-.566 7.003 7.003 0 0 1 13.238.006.87.87 0 0 1 0 .566A7.003 7.003 0 0 1 1.379 8.28ZM11 8a3 3 0 1 1-6 0 3 3 0 0 1 6 0Z"/></svg><span style="font-size:14.35px;-webkit-text-stroke:0.25px currentColor;letter-spacing:0.176px;margin-right:-0.176px;">View</span></a><a class="act a-amber" style="width:45px"><svg width="16" height="16" viewBox="0 0 16 16" fill="currentColor" style=""><path d="M13.488 2.513a1.75 1.75 0 0 0-2.475 0L6.75 6.774a2.75 2.75 0 0 0-.596.892l-.848 2.047a.75.75 0 0 0 .98.98l2.047-.848a2.75 2.75 0 0 0 .892-.596l4.261-4.262a1.75 1.75 0 0 0 0-2.474Z"/><path d="M4.75 3.5c-.69 0-1.25.56-1.25 1.25v6.5c0 .69.56 1.25 1.25 1.25h6.5c.69 0 1.25-.56 1.25-1.25V9A.75.75 0 0 1 14 9v2.25A2.75 2.75 0 0 1 11.25 14h-6.5A2.75 2.75 0 0 1 2 11.25v-6.5A2.75 2.75 0 0 1 4.75 2H7a.75.75 0 0 1 0 1.5H4.75Z"/></svg><span style="font-size:14.35px;-webkit-text-stroke:0.25px currentColor;letter-spacing:0.323px;margin-right:-0.323px;">Edit</span></a><a class="act a-green" style="width:77px"><svg width="16" height="16" viewBox="0 0 24 24" fill="none" stroke="currentColor" stroke-width="1.5" stroke-linecap="round" stroke-linejoin="round" style=""><path d="M9 12.75 11.25 15 15 9.75M21 12a9 9 0 1 1-18 0 9 9 0 0 1 18 0Z"/></svg><span style="font-size:14.35px;-webkit-text-stroke:0.25px currentColor;letter-spacing:0.425px;margin-right:-0.425px;">Approve</span></a><a class="act a-red" style="width:67px"><svg width="16" height="16" viewBox="0 0 24 24" fill="none" stroke="currentColor" stroke-width="1.5" stroke-linecap="round" stroke-linejoin="round" style=""><path d="m9.75 9.75 4.5 4.5m0-4.5-4.5 4.5M21 12a9 9 0 1 1-18 0 9 9 0 0 1 18 0Z"/></svg><span style="font-size:14.35px;-webkit-text-stroke:0.25px currentColor;letter-spacing:0.248px;margin-right:-0.248px;">Cancel</span></a><a class="act a-gray" style="width:85px"><svg width="16" height="16" viewBox="0 0 24 24" fill="none" stroke="currentColor" stroke-width="1.5" stroke-linecap="round" stroke-linejoin="round" style=""><path d="M3 3v1.5M3 21v-6m0 0 2.77-.693a9 9 0 0 1 6.208.682l.108.054a9 9 0 0 0 6.086.71l3.114-.732a48.524 48.524 0 0 1-.005-10.499l-3.11.732a9 9 0 0 1-6.085-.711l-.108-.054a9 9 0 0 0-6.208-.682L3 4.5M3 15V4.5"/></svg><span style="font-size:14.35px;-webkit-text-stroke:0.25px currentColor;letter-spacing:0.327px;margin-right:-0.327px;">Complete</span></a></div></td></tr>
<tr><td><span class="cb"></span></td>
<td><span class="segs" style="width:98.0px"><span style="font-size:14.35px;letter-spacing:0.176px;margin-right:-0.176px;position:absolute;top:0;left:0.80px;">Tom</span> <span style="font-size:14.35px;letter-spacing:0.375px;margin-right:-0.375px;position:absolute;top:0;left:32.00px;">Haverford</span></span></td>
<td><span class="badge b-amber" style="width:60px"><span style="font-size:12.25px;-webkit-text-stroke:0.15px currentColor;letter-spacing:0.053px;margin-right:-0.053px;">Personal</span></span></td>
<td><span class="segs" style="width:167.6px"><span style="font-size:14.35px;letter-spacing:0.439px;margin-right:-0.439px;position:absolute;top:0;left:-1.10px;">Home</span> <span style="font-size:14.35px;letter-spacing:0.101px;margin-right:-0.101px;position:absolute;top:0;left:43.00px;">repair</span> <span style="font-size:14.35px;letter-spacing:0.324px;margin-right:-0.324px;position:absolute;top:0;left:85.40px;">appointment</span></span></td>
<td><span class="segs" style="width:144.2px"><span style="font-size:14.35px;letter-spacing:0.312px;margin-right:-0.312px;position:absolute;top:0;left:0.50px;">Jan 30, 2026</span> <span style="font-size:14.35px;letter-spacing:-0.913px;margin-right:0.913px;position:absolute;top:0;left:92.60px;">9:10</span> <span style="font-size:14.35px;letter-spacing:0.733px;margin-right:-0.733px;position:absolute;top:0;left:122.90px;">PM</span></span></td>
<td><span class="badge b-red" style="width:66px"><span style="font-size:12.25px;-webkit-text-stroke:0.15px currentColor;">Cancelled</span></span></td>
<td style="padding:0"><div class="actions"><a class="act a-gray" style="width:53px"><svg width="16" height="16" viewBox="0 0 16 16" fill="currentColor" style=""><path d="M8 9.5a1.5 1.5 0 1 0 0-3 1.5 1.5 0 0 0 0 3Z"/><path fill-rule="evenodd" clip-rule="evenodd" d="M1.38 8.28a.87.87 0 0 1 0-.566 7.003 7.003 0 0 1 13.238.006.87.87 0 0 1 0 .566A7.003 7.003 0 0 1 1.379 8.28ZM11 8a3 3 0 1 1-6 0 3 3 0 0 1 6 0Z"/></svg><span style="font-size:14.35px;-webkit-text-stroke:0.25px currentColor;letter-spacing:0.176px;margin-right:-0.176px;">View</span></a><a class="act a-amber" style="width:45px"><svg width="16" height="16" viewBox="0 0 16 16" fill="currentColor" style=""><path d="M13.488 2.513a1.75 1.75 0 0 0-2.475 0L6.75 6.774a2.75 2.75 0 0 0-.596.892l-.848 2.047a.75.75 0 0 0 .98.98l2.047-.848a2.75 2.75 0 0 0 .892-.596l4.261-4.262a1.75 1.75 0 0 0 0-2.474Z"/><path d="M4.75 3.5c-.69 0-1.25.56-1.25 1.25v6.5c0 .69.56 1.25 1.25 1.25h6.5c.69 0 1.25-.56 1.25-1.25V9A.75.75 0 0 1 14 9v2.25A2.75 2.75 0 0 1 11.25 14h-6.5A2.75 2.75 0 0 1 2 11.25v-6.5A2.75 2.75 0 0 1 4.75 2H7a.75.75 0 0 1 0 1.5H4.75Z"/></svg><span style="font-size:14.35px;-webkit-text-stroke:0.25px currentColor;letter-spacing:0.323px;margin-right:-0.323px;">Edit</span></a><a class="act a-green" style="width:77px"><svg width="16" height="16" viewBox="0 0 24 24" fill="none" stroke="currentColor" stroke-width="1.5" stroke-linecap="round" stroke-linejoin="round" style=""><path d="M9 12.75 11.25 15 15 9.75M21 12a9 9 0 1 1-18 0 9 9 0 0 1 18 0Z"/></svg><span style="font-size:14.35px;-webkit-text-stroke:0.25px currentColor;letter-spacing:0.425px;margin-right:-0.425px;">Approve</span></a><a class="act a-red" style="width:67px"><svg width="16" height="16" viewBox="0 0 24 24" fill="none" stroke="currentColor" stroke-width="1.5" stroke-linecap="round" stroke-linejoin="round" style=""><path d="m9.75 9.75 4.5 4.5m0-4.5-4.5 4.5M21 12a9 9 0 1 1-18 0 9 9 0 0 1 18 0Z"/></svg><span style="font-size:14.35px;-webkit-text-stroke:0.25px currentColor;letter-spacing:0.248px;margin-right:-0.248px;">Cancel</span></a><a class="act a-gray" style="width:85px"><svg width="16" height="16" viewBox="0 0 24 24" fill="none" stroke="currentColor" stroke-width="1.5" stroke-linecap="round" stroke-linejoin="round" style=""><path d="M3 3v1.5M3 21v-6m0 0 2.77-.693a9 9 0 0 1 6.208.682l.108.054a9 9 0 0 0 6.086.71l3.114-.732a48.524 48.524 0 0 1-.005-10.499l-3.11.732a9 9 0 0 1-6.085-.711l-.108-.054a9 9 0 0 0-6.208-.682L3 4.5M3 15V4.5"/></svg><span style="font-size:14.35px;-webkit-text-stroke:0.25px currentColor;letter-spacing:0.327px;margin-right:-0.327px;">Complete</span></a></div></td></tr>
</tbody></table>
<div class="footer">
<span class="showing" style="font-size:14.35px;-webkit-text-stroke:0.25px currentColor;letter-spacing:0.171px;margin-right:-0.171px;">Showing 1 to 10 of 29 results</span>
<div class="perpage"><span class="lbl"><span style="font-size:14.35px;letter-spacing:0.195px;margin-right:-0.195px;">Per page</span></span><span class="sel"><span style="font-size:14.35px;letter-spacing:-0.777px;margin-right:0.777px;">10</span><svg width="20" height="20" viewBox="0 0 20 20" fill="currentColor" style=""><path fill-rule="evenodd" clip-rule="evenodd" d="M5.22 8.22a.75.75 0 0 1 1.06 0L10 11.94l3.72-3.72a.75.75 0 1 1 1.06 1.06l-4.25 4.25a.75.75 0 0 1-1.06 0L5.22 9.28a.75.75 0 0 1 0-1.06Z"/></svg></span></div>
<ol class="pager"><li class="cur" style="width:35px"><span style="font-size:14.35px;-webkit-text-stroke:0.55px currentColor;">1</span></li><li style="width:39px"><span style="font-size:14.35px;-webkit-text-stroke:0.55px currentColor;">2</span></li><li style="width:39px"><span style="font-size:14.35px;-webkit-text-stroke:0.55px currentColor;">3</span></li><li style="width:37px"><svg width="20" height="20" viewBox="0 0 20 20" fill="currentColor" style=""><path fill-rule="evenodd" clip-rule="evenodd" d="M8.22 5.22a.75.75 0 0 1 1.06 0l4.25 4.25a.75.75 0 0 1 0 1.06l-4.25 4.25a.75.75 0 0 1-1.06-1.06L11.94 10 8.22 6.28a.75.75 0 0 1 0-1.06Z"/></svg></li></ol>
</div></section></main></body></html>
